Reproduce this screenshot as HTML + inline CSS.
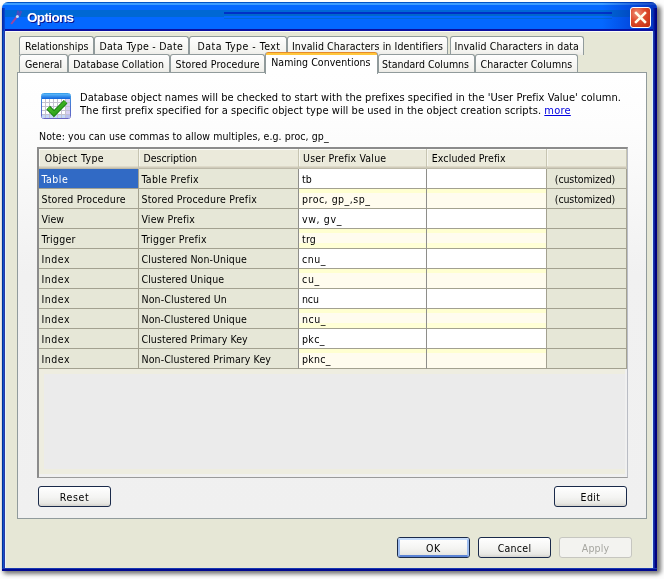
<!DOCTYPE html>
<html><head><meta charset="utf-8">
<style>
*{box-sizing:border-box;margin:0;padding:0}
html,body{width:664px;height:579px;background:#fdfdfd;overflow:hidden}
body{position:relative;font-family:"DejaVu Sans Condensed","Liberation Sans",sans-serif;font-size:10.5px;color:#000}
.abs{position:absolute}
#shadow{left:3px;top:6px;width:658px;height:568px;background:#767676;filter:blur(2px);border-radius:4px}
#win{will-change:transform;left:2px;top:2px;width:655px;height:569px;background:#e6e7d6;border-radius:6px 6px 0 0;overflow:hidden}
.fl{left:0;top:29px;width:4px;height:540px;background:linear-gradient(90deg,#0030a0 0,#0030a0 1px,#1050c8 1px,#1050c8 2px,#3038a0 2px,#3038a0 3px,#e0f4ff 3px)}
.fr{left:650px;top:29px;width:5px;height:540px;background:linear-gradient(90deg,#d8f0ff 0,#d8f0ff 1px,#2038a8 1px,#2038a8 2px,#0c24a0 2px,#0c24a0 3px,#000080 3px)}
.fb{left:0;top:566px;width:655px;height:3px;background:linear-gradient(#1838b0 0,#1838b0 1px,#000890 1px)}
#title{left:0;top:0;width:655px;height:29px;background:linear-gradient(#0054c8 0,#0054c8 1px,#3c9cff 1px,#3c9cff 3px,#0468ff 3px,#0468ff 8px,#0068d4 8px,#0068d4 15px,#0468ff 15px,#0468ff 27.5px,#0c10a0 27.5px,#0c10a0 29px)}
#band{left:222px;top:10px;width:388px;height:7px;background:linear-gradient(#0030c8 0,#0030c8 2px,#0068cc 2px,#0068cc 4px,#0468ff 4px,#0468ff 5.7px,#0068d4 5.7px,#0068d4 6.7px,#0468ff 6.7px)}
#ttext{left:25px;top:8.8px;font:bold 13.5px/13px "Liberation Sans",sans-serif;letter-spacing:-0.65px;color:#fff;text-shadow:1px 1px 0 #0f1089;white-space:nowrap}
#close{left:628px;top:5px;width:21px;height:21px;border:1px solid #fff;border-radius:3px;background:radial-gradient(circle at 32% 28%,#ee9078 0%,#de4c2c 42%,#c02c0c 100%)}
.tab{position:absolute;height:19px;border:1px solid #919b9c;border-bottom:none;border-radius:3px 3px 0 0;background:linear-gradient(#fefefe,#f3f3ef 80%,#ecebe6);white-space:nowrap;padding:3px 0 0 5px;overflow:hidden;line-height:13px}
.r1{top:34px}.r2{top:52px;height:18px}
#pane{left:15px;top:70px;width:630px;height:447px;border:1px solid #919b9c;background:linear-gradient(#ffffff 0,#fdfdfd 12%,#f1f1f1 45%,#f0f0f0 100%)}
.btn{position:absolute;height:21px;width:73px;border:1px solid #1a2a4a;border-radius:3px;background:linear-gradient(#ffffff,#f4f4f2 55%,#e8e8e4 85%,#d4d2cc);text-align:center;line-height:19px;padding-top:1px}
.ring{left:0;top:0;width:71px;height:19px;border:2px solid;border-color:#c6dcfa #9fbef0 #5c84d6 #9fbef0;border-radius:2px}
#grid{left:35px;top:145px;width:591px;height:331px;border:solid #8b8b8b;border-width:2px 1px 1px 2px;border-right-color:#b9bcc4;border-bottom-color:#9a9a9a;background:#f0f0f0}
#empty{left:0;top:220px;width:586px;height:105px;background:#ebebeb;border:solid #eeede0;border-width:5px 0 5px 5px}
.hd{position:absolute;top:0;height:20px;background:#ebeadb;border-right:1px solid #c7c5b2;box-shadow:inset 0 -1px 0 #bdb9a8, inset 0 -2px 0 #cfcbba, inset 0 -3px 0 #dedac9, inset 0 1px 0 #fbfbf6, inset 1px 0 0 #f6f6ee;line-height:19px;padding-left:6px;white-space:nowrap}
#seltab{top:50px;height:22px;background:#ffffff;border-top:none;padding-top:4px;z-index:3}
#selcap{left:-1px;top:0;width:113px;height:3px;background:#ffc73c;border-radius:3px 3px 0 0;border:1px solid #e68b2c;border-bottom:none}
.lnk{color:#0000e0;text-decoration:underline}
.c{position:absolute;height:20px;line-height:20px;padding-left:3px;white-space:nowrap;border-right:1px solid #a3a190;border-bottom:1px solid #a3a190;background:#e6e7d7}
</style></head><body>
<div id="shadow" class="abs"></div>
<div id="win" class="abs">
 <div id="title" class="abs"></div>
 <div id="band" class="abs"></div>
 <div class="abs" style="left:600px;top:0;width:55px;height:27.5px;background:linear-gradient(90deg,rgba(0,24,170,0),rgba(0,24,170,.42) 60%,rgba(0,16,150,.6))"></div>
 <svg class="abs" style="left:6px;top:6px;opacity:.82" width="18" height="18" viewBox="0 0 18 18"><path d="M3.2 16 L9 8.6" stroke="#c04088" stroke-width="2"/><path d="M9.3 8 L10.2 2.6 M11 8.2 L13.2 3" stroke="#6a44b8" stroke-width="2.2" opacity=".85"/><circle cx="9.4" cy="8.4" r="1.5" fill="#f4f4ff"/></svg>
 <div class="abs" style="left:3px;top:29px;width:648px;height:1px;background:#fbfbf8"></div>
 <div class="abs" style="left:0;top:6px;width:3px;height:23px;background:linear-gradient(90deg,#0024a4,#0a4cd4)"></div><div class="abs" style="left:651px;top:6px;width:4px;height:23px;background:linear-gradient(90deg,#1030b0,#000c90 50%,#000080)"></div><div class="abs fl"></div><div class="abs fr"></div><div class="abs fb"></div>
 <div id="ttext" class="abs">Options</div>
 <div id="close" class="abs"><svg width="19" height="19" viewBox="0 0 19 19"><path d="M5 5 L14 14 M14 5 L5 14" stroke="#fffbe8" stroke-width="2.5" stroke-linecap="square"/></svg></div>

 <div class="tab r1" style="left:17px;width:75px;padding-left:5.0px;letter-spacing:0.048px;">Relationships</div>
 <div class="tab r1" style="left:92px;width:95px;padding-left:4.5px;letter-spacing:0.276px;">Data Type - Date</div>
 <div class="tab r1" style="left:187px;width:98px;padding-left:7.5px;letter-spacing:0.475px;">Data Type - Text</div>
 <div class="tab r1" style="left:285px;width:161px;padding-left:4.0px;letter-spacing:0.089px;">Invalid Characters in Identifiers</div>
 <div class="tab r1" style="left:448px;width:134px;padding-left:3.5px;letter-spacing:0.102px;">Invalid Characters in data</div>
 <div class="tab r2" style="left:17px;width:49px;padding-left:5.0px;letter-spacing:-0.005px;">General</div>
 <div class="tab r2" style="left:66px;width:102px;padding-left:4.2px;letter-spacing:0.067px;">Database Collation</div>
 <div class="tab r2" style="left:168px;width:95px;padding-left:4.5px;letter-spacing:0.179px;">Stored Procedure</div>
 <div class="tab r2" style="left:376px;width:97px;padding-left:3.0px;letter-spacing:-0.004px;">Standard Columns</div>
 <div class="tab r2" style="left:473px;width:103px;padding-left:4.5px;letter-spacing:0.056px;">Character Columns</div>

 <div id="pane" class="abs"></div>
 <div class="tab" id="seltab" style="left:263px;width:113px;padding-left:5.2px;letter-spacing:0.048px"><div class="abs" id="selcap"></div>Naming Conventions</div>

 <!-- icon -->
 <svg class="abs" style="left:39px;top:91px" width="30" height="26" viewBox="0 0 30 26">
  <defs><linearGradient id="ih" x1="0" y1="0" x2="0" y2="1"><stop offset="0" stop-color="#5ab8fa"/><stop offset="1" stop-color="#0e62dc"/></linearGradient>
  <linearGradient id="ib" x1="0" y1="0" x2="0" y2="1"><stop offset="0" stop-color="#3aa0ec"/><stop offset=".5" stop-color="#4a74d0"/><stop offset="1" stop-color="#6a66c4"/></linearGradient>
  <linearGradient id="ic" x1="0" y1="0" x2="1" y2="1"><stop offset="0" stop-color="#58c830"/><stop offset="1" stop-color="#1f9414"/></linearGradient></defs>
  <rect x="0.5" y="0.5" width="29" height="25" rx="2.2" fill="#ffffff" stroke="url(#ib)"/>
  <rect x="1" y="1" width="28" height="5" fill="url(#ih)"/>
  <rect x="25" y="6" width="4" height="19" fill="#d8d0f4"/>
  <rect x="1" y="22" width="28" height="3" fill="#c4d8f8"/>
  <rect x="25" y="22" width="4" height="3" fill="#b8c0f0"/>
  <g stroke="#c4c2d0" stroke-width="1"><path d="M4.5 6V25M8.5 6V25M12.5 6V25M16.5 6V25M20.5 6V25M24.5 6V25M1 9.5H29M1 13.5H29M1 17.5H29M1 21.5H29"/></g>
  <path d="M7.2 14.6 L13 20.6 L24.6 8.8" stroke="#187c10" stroke-width="5.2" fill="none" stroke-linejoin="miter"/>
  <path d="M7.2 14.6 L13 20.6 L24.6 8.8" stroke="url(#ic)" stroke-width="3.4" fill="none" stroke-linejoin="miter"/>
 </svg>
 <div class="abs" style="left:78px;top:89px;line-height:13px;white-space:nowrap;font-size:11px"><span style="letter-spacing:0.05px">Database object names will be checked to start with the prefixes specified in the 'User Prefix Value' column.</span><br><span style="letter-spacing:0.064px">The first prefix specified for a specific object type will be used in the object creation scripts. </span><span class="lnk" style="letter-spacing:0.223px">more</span></div>
 <div class="abs" style="left:37px;top:128px;white-space:nowrap"><span style="letter-spacing:0.074px">Note: you can use commas to allow multiples, e.g. proc, gp_</span></div>

 <div id="grid" class="abs">
  <div class="hd" style="left:0px;width:100px;padding-left:5.7px;letter-spacing:0.362px;">Object Type</div>
  <div class="hd" style="left:100px;width:160px;padding-left:4.5px;letter-spacing:-0.028px;">Description</div>
  <div class="hd" style="left:260px;width:128px;padding-left:4.1px;letter-spacing:0.199px;">User Prefix Value</div>
  <div class="hd" style="left:388px;width:120px;padding-left:4.8px;letter-spacing:0.099px;">Excluded Prefix</div>
  <div class="hd" style="left:508px;width:80px;"></div>
  <div class="c" style="left:0px;top:20px;width:100px;background:#316ac5;color:#fff;padding-left:2.5px;letter-spacing:0.487px;">Table</div>
  <div class="c" style="left:100px;top:20px;width:160px;border-right-color:#8e8e8a;padding-left:2.5px;letter-spacing:0.31px;">Table Prefix</div>
  <div class="c" style="left:260px;top:20px;width:128px;border-right-color:#8e8e8a;background:#ffffff;padding-left:3.0px;letter-spacing:0.148px;">tb</div>
  <div class="c" style="left:388px;top:20px;width:120px;background:#ffffff;"></div>
  <div class="c" style="left:508px;top:20px;width:80px;padding-left:7.8px;letter-spacing:-0.097px;">(customized)</div>
  <div class="c" style="left:0px;top:40px;width:100px;padding-left:2.5px;letter-spacing:0.179px;">Stored Procedure</div>
  <div class="c" style="left:100px;top:40px;width:160px;border-right-color:#8e8e8a;padding-left:2.5px;letter-spacing:0.202px;">Stored Procedure Prefix</div>
  <div class="c" style="left:260px;top:40px;width:128px;border-right-color:#8e8e8a;background:linear-gradient(#ffffd0 0,#ffffd0 4px,#fffcee 4px,#fffcee 100%);padding-left:3.0px;letter-spacing:0.501px;">proc, gp_,sp_</div>
  <div class="c" style="left:388px;top:40px;width:120px;background:linear-gradient(#ffffd0 0,#ffffd0 4px,#fffcee 4px,#fffcee 100%);"></div>
  <div class="c" style="left:508px;top:40px;width:80px;padding-left:7.8px;letter-spacing:-0.097px;">(customized)</div>
  <div class="c" style="left:0px;top:60px;width:100px;padding-left:2.5px;letter-spacing:0.023px;">View</div>
  <div class="c" style="left:100px;top:60px;width:160px;border-right-color:#8e8e8a;padding-left:2.5px;letter-spacing:0.143px;">View Prefix</div>
  <div class="c" style="left:260px;top:60px;width:128px;border-right-color:#8e8e8a;background:#ffffff;padding-left:3.0px;letter-spacing:0.625px;">vw, gv_</div>
  <div class="c" style="left:388px;top:60px;width:120px;background:#ffffff;"></div>
  <div class="c" style="left:508px;top:60px;width:80px;"></div>
  <div class="c" style="left:0px;top:80px;width:100px;padding-left:2.5px;letter-spacing:0.252px;">Trigger</div>
  <div class="c" style="left:100px;top:80px;width:160px;border-right-color:#8e8e8a;padding-left:2.5px;letter-spacing:0.239px;">Trigger Prefix</div>
  <div class="c" style="left:260px;top:80px;width:128px;border-right-color:#8e8e8a;background:linear-gradient(#ffffd0 0,#ffffd0 4px,#fffcee 4px,#fffcee 14px,#ffffd6 14px);padding-left:3.0px;letter-spacing:0.198px;">trg</div>
  <div class="c" style="left:388px;top:80px;width:120px;background:linear-gradient(#ffffd0 0,#ffffd0 4px,#fffcee 4px,#fffcee 14px,#ffffd6 14px);"></div>
  <div class="c" style="left:508px;top:80px;width:80px;"></div>
  <div class="c" style="left:0px;top:100px;width:100px;padding-left:2.5px;letter-spacing:0.5px;">Index</div>
  <div class="c" style="left:100px;top:100px;width:160px;border-right-color:#8e8e8a;padding-left:2.5px;letter-spacing:0.086px;">Clustered Non-Unique</div>
  <div class="c" style="left:260px;top:100px;width:128px;border-right-color:#8e8e8a;background:#ffffff;padding-left:3.0px;letter-spacing:0.523px;">cnu_</div>
  <div class="c" style="left:388px;top:100px;width:120px;background:#ffffff;"></div>
  <div class="c" style="left:508px;top:100px;width:80px;"></div>
  <div class="c" style="left:0px;top:120px;width:100px;padding-left:2.5px;letter-spacing:0.5px;">Index</div>
  <div class="c" style="left:100px;top:120px;width:160px;border-right-color:#8e8e8a;padding-left:2.5px;letter-spacing:0.072px;">Clustered Unique</div>
  <div class="c" style="left:260px;top:120px;width:128px;border-right-color:#8e8e8a;background:linear-gradient(#ffffd0 0,#ffffd0 4px,#fffcee 4px,#fffcee 100%);padding-left:3.0px;letter-spacing:0.698px;">cu_</div>
  <div class="c" style="left:388px;top:120px;width:120px;background:linear-gradient(#ffffd0 0,#ffffd0 4px,#fffcee 4px,#fffcee 100%);"></div>
  <div class="c" style="left:508px;top:120px;width:80px;"></div>
  <div class="c" style="left:0px;top:140px;width:100px;padding-left:2.5px;letter-spacing:0.5px;">Index</div>
  <div class="c" style="left:100px;top:140px;width:160px;border-right-color:#8e8e8a;padding-left:2.5px;letter-spacing:0.14px;">Non-Clustered Un</div>
  <div class="c" style="left:260px;top:140px;width:128px;border-right-color:#8e8e8a;background:#ffffff;padding-left:3.0px;letter-spacing:-0.124px;">ncu</div>
  <div class="c" style="left:388px;top:140px;width:120px;background:#ffffff;"></div>
  <div class="c" style="left:508px;top:140px;width:80px;"></div>
  <div class="c" style="left:0px;top:160px;width:100px;padding-left:2.5px;letter-spacing:0.5px;">Index</div>
  <div class="c" style="left:100px;top:160px;width:160px;border-right-color:#8e8e8a;padding-left:2.5px;letter-spacing:0.086px;">Non-Clustered Unique</div>
  <div class="c" style="left:260px;top:160px;width:128px;border-right-color:#8e8e8a;background:linear-gradient(#ffffd0 0,#ffffd0 4px,#fffcee 4px,#fffcee 14px,#ffffd6 14px);padding-left:3.0px;letter-spacing:0.523px;">ncu_</div>
  <div class="c" style="left:388px;top:160px;width:120px;background:linear-gradient(#ffffd0 0,#ffffd0 4px,#fffcee 4px,#fffcee 14px,#ffffd6 14px);"></div>
  <div class="c" style="left:508px;top:160px;width:80px;"></div>
  <div class="c" style="left:0px;top:180px;width:100px;padding-left:2.5px;letter-spacing:0.5px;">Index</div>
  <div class="c" style="left:100px;top:180px;width:160px;border-right-color:#8e8e8a;padding-left:2.5px;letter-spacing:0.073px;">Clustered Primary Key</div>
  <div class="c" style="left:260px;top:180px;width:128px;border-right-color:#8e8e8a;background:#ffffff;padding-left:3.0px;letter-spacing:0.352px;">pkc_</div>
  <div class="c" style="left:388px;top:180px;width:120px;background:#ffffff;"></div>
  <div class="c" style="left:508px;top:180px;width:80px;"></div>
  <div class="c" style="left:0px;top:200px;width:100px;padding-left:2.5px;letter-spacing:0.5px;">Index</div>
  <div class="c" style="left:100px;top:200px;width:160px;border-right-color:#8e8e8a;padding-left:2.5px;letter-spacing:0.104px;">Non-Clustered Primary Key</div>
  <div class="c" style="left:260px;top:200px;width:128px;border-right-color:#8e8e8a;background:linear-gradient(#ffffd0 0,#ffffd0 4px,#fffcee 4px,#fffcee 100%);padding-left:3.0px;letter-spacing:0.285px;">pknc_</div>
  <div class="c" style="left:388px;top:200px;width:120px;background:linear-gradient(#ffffd0 0,#ffffd0 4px,#fffcee 4px,#fffcee 100%);"></div>
  <div class="c" style="left:508px;top:200px;width:80px;"></div>
  <div id="empty" class="abs"></div>
 </div>

 <div class="btn" style="left:36px;top:484px;letter-spacing:0.611px">Reset</div>
 <div class="btn" style="left:552px;top:484px;letter-spacing:0.401px">Edit</div>
 <div class="btn" style="left:395px;top:535px;letter-spacing:0.68px"><div class="abs ring"></div>OK</div>
 <div class="btn" style="left:476px;top:535px;letter-spacing:0.281px">Cancel</div>
 <div class="btn" style="left:557px;top:535px;border-color:#c6c6c0;background:#f3f3f0;color:#a6a6a0;letter-spacing:0.146px">Apply</div>
</div>
</body></html>
